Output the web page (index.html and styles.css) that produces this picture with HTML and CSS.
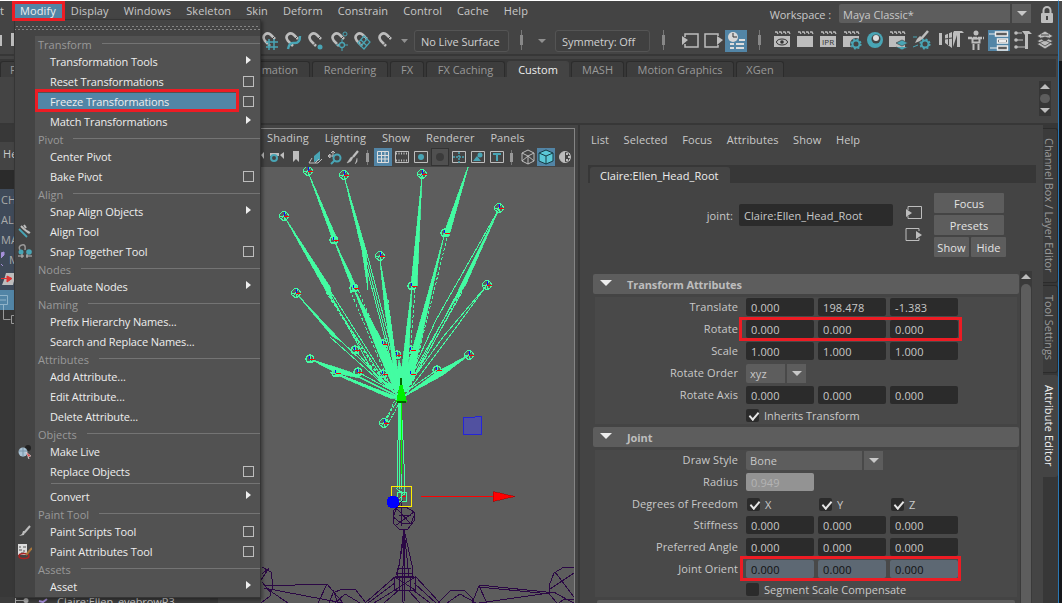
FILE: index.html
```html
<!DOCTYPE html>
<html lang="en">
<head>
<meta charset="utf-8">
<title>Maya</title>
<link rel="stylesheet" href="styles.css">
</head>
<body>
<svg class="defs" width="0" height="0">
  <defs>
    <g id="clap"><path d="M1 2h2l1 2M5 2h2l1 2M9 2h2l1 2M13 2h2l1 2" fill="none" stroke="#bdbdbd" stroke-width="1.300"/><rect x="0" y="6" width="16" height="11" fill="#bdbdbd"/></g>
    <g id="magnet"><path d="M8 14L3 9Q0 5 3 2.500Q6 0 9 3L13 7" fill="none" stroke="#bdbdbd" stroke-width="2.600"/><path d="M5 13.500L7.500 11M10 7L12.500 4.500" stroke="#444" stroke-width="1"/></g>
    <g id="gear"><circle r="3.500" fill="none" stroke="#49a5b5" stroke-width="2"/><circle r="4.800" fill="none" stroke="#49a5b5" stroke-width="1.500" stroke-dasharray="2 1.770"/></g>
    <g id="jt"><circle r="4.300" fill="none" stroke="#43fca2" stroke-width="1.200"/><path d="M-4 0H4M0 -5V5M-3 3L2 -3" stroke="#43fca2" fill="none"/><path d="M0 -4h1v4h-1z" fill="#0b0bff"/><path d="M0 0H5V1H0z" fill="#f00"/></g>
    <g id="js"><circle r="4" fill="none" stroke="#43fca2" stroke-width="1.200"/><path d="M0 -4V4M-3 2H3" stroke="#43fca2"/><path d="M-1 -3h1v3h-1z" fill="#0b0bff"/><path d="M0 0H5V1H0z" fill="#f00"/></g>
  </defs>
</svg>
<div class="app">
  <div class="window">
    <nav class="menubar">
      <span class="cut">t</span><span class="m on">Modify</span><span class="m">Display</span><span class="m">Windows</span><span class="m">Skeleton</span><span class="m">Skin</span><span class="m">Deform</span><span class="m">Constrain</span><span class="m">Control</span><span class="m">Cache</span><span class="m">Help</span>
      <div class="workspace"><span>Workspace :</span><div class="combo big"><b>Maya Classic*</b><i></i></div>
        <svg width="14" height="18"><path d="M3.500 8V4.500a3.500 3.500 0 0 1 7 0V8" fill="none" stroke="#bdbdbd" stroke-width="2"/><rect x="1" y="7" width="12" height="10" rx="1" fill="#bdbdbd"/><path d="M7 10v4" stroke="#444" stroke-width="2"/></svg>
      </div>
    </nav>
    <div class="toolbar">
      <svg class="files" width="16" height="20"><path d="M0 5h2v11h-2zM11 3h5v13h-5z" fill="#bdbdbd"/></svg>
      <svg class="snaps" width="150" height="22">
        <use href="#magnet" x="1" y="2"/><path d="M8 9v11M13 9v11M5 12h12M5 17h12" stroke="#49a5b5" stroke-width="1.500"/>
        <use href="#magnet" x="24" y="2"/><path d="M27 19Q28 12 34 13Q39 13 39 6" fill="none" stroke="#49a5b5" stroke-width="2.400"/>
        <use href="#magnet" x="47" y="2"/><circle cx="59" cy="17" r="2.500" fill="#49a5b5"/>
        <use href="#magnet" x="70" y="2"/><circle cx="84" cy="4" r="2" fill="none" stroke="#49a5b5"/><circle cx="81" cy="15" r="2.500" fill="none" stroke="#49a5b5" stroke-width="1.300"/><path d="M81 9v3M81 18v3M84 15h3M75 15h3" stroke="#49a5b5"/>
        <use href="#magnet" x="93" y="2"/><path d="M97 13l6 6 6-7-6-6zM100 10l6 6M100 16l6-7" fill="none" stroke="#49a5b5" stroke-width="1.200"/>
        <use href="#magnet" x="117" y="2"/><path d="M140 9h7l-3.500 4z" fill="#909090"/>
      </svg>
      <span class="entry live">No Live Surface</span>
      <i class="grip"></i><i class="drop"></i>
      <span class="entry sym">Symmetry: Off</span>
      <i class="grip g2"></i>
      <svg class="hist" width="68" height="22"><path d="M4 7V4H17V17H4V14" fill="none" stroke="#bdbdbd" stroke-width="1.500"/><path d="M1 6l6 4-6 5zM36 6l6 4-6 5z" fill="#bdbdbd"/><path d="M37 6V4H24V17H37V15" fill="none" stroke="#bdbdbd" stroke-width="1.500"/><rect x="44" width="22" height="22" fill="#5285a6"/><circle cx="52" cy="7" r="5" fill="#d8d8d8"/><path d="M52 3v4h4" stroke="#333" fill="none"/><path d="M49 14h4M49 18h4M58 10h6M55 14h8M55 18h8" stroke="#ddd" stroke-width="2"/></svg>
      <i class="grip g3"></i>
      <svg class="render" width="284" height="22">
        <use href="#clap"/><ellipse cx="8" cy="12" rx="5.500" ry="3" fill="none" stroke="#333"/><circle cx="8" cy="12" r="1.800" fill="#333"/>
        <use href="#clap" x="23"/><use href="#clap" x="46"/><text x="48" y="15" class="ipr">IPR</text>
        <use href="#clap" x="69"/><circle cx="82" cy="14" r="6" fill="#444"/><use href="#gear" x="82" y="14"/>
        <circle cx="101" cy="10" r="8" fill="#49a5b5"/><circle cx="102" cy="9" r="4.500" fill="#444"/><circle cx="102" cy="8" r="3" fill="#ddd"/>
        <use href="#clap" x="115"/><path d="M122 13l6-3 6 3-6 3zM122 17l6 3 6-3" fill="#49a5b5" stroke="#444" stroke-width=".700"/>
        <path d="M154 1l-7 8" stroke="#bdbdbd" stroke-width="2.500"/><path d="M141 13l5-2 3-3-3-2-3 3z" fill="#bdbdbd"/><path d="M139 7h4M139 17l5-2" stroke="#49a5b5"/><use href="#gear" x="151" y="14"/>
        <path d="M165 3h3v12h-3zM171 5l7-3v16l-7-5zM179 3l1-2h8l2 2h-4v14h-3V5l-4 12z" fill="#bdbdbd"/><path d="M171 9l7-1M174.500 3v12" stroke="#444"/>
        <circle cx="202" cy="3" r="2.500" fill="#bdbdbd"/><path d="M194 8h16" stroke="#bdbdbd" stroke-width="2.500" stroke-dasharray="4 1"/><path d="M198.500 8.500h7v4h-7zM199.500 14v6M204.500 14v6" fill="none" stroke="#bdbdbd" stroke-width="2"/>
        <rect x="214" width="22" height="21" fill="#5285a6"/><path d="M221.500 2h12v4h-12zM223.500 9h10v4h-10zM223.500 16h10v4h-10z" fill="#5c5c5c" stroke="#eee" stroke-width="1.400"/><path d="M215 4h6M216 18h7" stroke="#eee"/><path d="M225 11h7" stroke="#eee" stroke-width="2"/>
        <circle cx="242" cy="3" r="1.800" fill="#bdbdbd"/><circle cx="242" cy="10" r="1.800" fill="#bdbdbd"/><circle cx="242" cy="17" r="1.800" fill="#bdbdbd"/><path d="M243 3h5M243 10h6M243 17h9" stroke="#bdbdbd"/><path d="M248 1h7l3 3h-4v15h-3V5z" fill="#bdbdbd"/>
        <path d="M263 14l8 5 8-5-8-4zM263 11l8 5 8-5-8-4zM263 6l8-5 8 5-8 5z" fill="#bdbdbd" stroke="#444" stroke-width=".800"/><path d="M267 5h8M267 8h8" stroke="#444"/>
      </svg>
    </div>
    <div class="shelf">
      <div class="tabs">
        <span class="tab" style="width:90px">F</span><span class="tab" style="width:99px"></span><span class="tab" style="width:117px">Animation</span><span class="tab" style="width:76px">Rendering</span><span class="tab" style="width:34px">FX</span><span class="tab" style="width:79px">FX Caching</span><span class="tab cur" style="width:62px">Custom</span><span class="tab" style="width:53px">MASH</span><span class="tab" style="width:108px">Motion Graphics</span><span class="tab" style="width:48px">XGen</span>
      </div>
      <div class="shelfbody"><div class="spin"><i class="up"></i><u></u><i class="dn"></i></div></div>
    </div>
    <div class="main">
      <aside class="outliner">
        <div class="o-head">He</div><div class="o-dark"></div>
        <div class="o-row">CH</div><div class="o-row">ALE</div><div class="o-row">MA</div>
        <div class="o-row"><svg width="8" height="20"><path d="M0 4l3-1v3l-3 3M0 15l2 2" fill="#a58fd8" stroke="#a58fd8"/></svg>M</div>
        <div class="o-row o-last"><svg width="15" height="20"><path d="M5 4h10l-3 12H1l2-5z" fill="#bdbdbd"/><path d="M0 9.500h8M6 7l5 2.500-5 3.500z" stroke="#d33" fill="#d33"/></svg></div>
        <div class="o-sel"><svg width="15" height="20"><path d="M0 5.500h7.500v9H0M0 10h6M3.500 15v5" fill="none" stroke="#8fb3c9"/></svg></div>
        <div class="o-fill"><svg width="15" height="20"><path d="M3.500 0v9.500h7M15 5.500h-3.500v8H15" fill="none" stroke="#999"/></svg></div>
        <div class="o-foot"><svg width="36" height="6"><path d="M0 3.500h10M.500 0v6" stroke="#aaa"/><circle cx="11" cy="3.500" r="2.500" fill="#aaa"/><path d="M24 4l4 1 4-3M27 4v3" stroke="#a58fd8" stroke-width="2" fill="none"/></svg><span>Claire:Ellen_eyebrowR3</span></div>
      </aside>
      <section class="viewport">
        <nav class="vmenu"><span>Shading</span><span>Lighting</span><span>Show</span><span>Renderer</span><span>Panels</span></nav>
        <svg class="vicons" viewBox="261 148 313 19" width="313" height="19">
          <path d="M261 155l3-3v7zM270 153h9v3h-9zM280 155l4-3v7zM293 151h6v11l-3-3-3 3z" fill="#bdbdbd"/><circle cx="274" cy="158" r="3" fill="none" stroke="#49a5b5" stroke-width="2"/>
          <path d="M320 151v9l-6 2v-6z" fill="#49a5b5"/><path d="M312 158l-3 5h9l4-4M315 163l4-4" fill="none" stroke="#bdbdbd"/>
          <path d="M328 156h10M333 151v6M328 156l2-2v4zM331 153l2-2 2 2" stroke="#bdbdbd" fill="none"/><circle cx="337" cy="158" r="3.500" fill="#444" stroke="#49a5b5" stroke-width="2"/><path d="M335 160l-4 4" stroke="#49a5b5" stroke-width="2"/>
          <path d="M358 151l-5 6" stroke="#bdbdbd" stroke-width="2.200"/><path d="M357 158q1 4-2 6M353 157q-1 5-6 6l2-3q2-4 4-3z" fill="#bdbdbd" stroke="#bdbdbd" stroke-width=".500"/>
          <path d="M367.500 150v15M511.500 150v15" stroke="#777"/><path d="M367.500 153v9M511.500 153v9" stroke="#999" stroke-width="3"/>
          <rect x="374" y="148" width="18" height="18" fill="#5285a6"/><path d="M377.500 151.500h11v11h-11zM377.500 155.500h11M377.500 159h11M381.500 151.500v11M385 151.500v11" fill="none" stroke="#ddd"/>
          <path d="M395.500 151.500h13v11h-13z" fill="none" stroke="#bdbdbd"/><path d="M396 153.500h13M396 160.500h13" stroke="#bdbdbd" stroke-width="2" stroke-dasharray="1 1.500"/>
          <path d="M414.500 151.500h13v11h-13z" fill="none" stroke="#bdbdbd"/><circle cx="421" cy="157" r="3" fill="#49a5b5"/>
          <rect x="431.500" y="148.500" width="17" height="17" fill="#505050" stroke="#333"/><circle cx="440" cy="157" r="4" fill="#3b3b3b"/>
          <path d="M452.500 151.500h13v11h-13z" fill="none" stroke="#bdbdbd"/><path d="M453 157h12M459 152v11" stroke="#49a5b5" stroke-width="1.500" stroke-dasharray="2 1"/>
          <path d="M471.500 151.500h13v11h-13z" fill="none" stroke="#bdbdbd"/><path d="M473 161l4-5 4 5z" fill="#49a5b5"/><circle cx="480" cy="155" r="2.500" fill="#49a5b5"/>
          <path d="M490.500 151.500h13v11h-13z" fill="none" stroke="#bdbdbd"/><path d="M493 154h8M497 154v7" stroke="#49a5b5" stroke-width="2"/>
          <path d="M528 150l6 3v8l-6 3-6-3v-8zM522 153l6 3 6-3M528 156v8M522 161l6-5 6 5" fill="none" stroke="#bdbdbd"/>
          <rect x="537" y="148" width="18" height="18" fill="#5285a6"/><path d="M546 150l7 3v8l-7 3-7-3v-8z" fill="#5bc8d6" stroke="#163c44"/><path d="M539 153l7 3 7-3M546 156v8" fill="none" stroke="#163c44"/>
          <circle cx="565" cy="157" r="5.500" fill="none" stroke="#bdbdbd"/><path d="M565 151.500a5.500 5.500 0 0 0 0 11z" fill="#bdbdbd"/><path d="M566 154h4M568 157h3M566 160h4" stroke="#bdbdbd" stroke-width="2" stroke-dasharray="2 1"/>
        </svg>
        <svg class="scene" viewBox="261 167 313 436" width="313" height="436" shape-rendering="crispEdges">
          <g fill="#43fca2" stroke="#43fca2" stroke-width=".800">
            <path d="M308 172L333 240 337 239zM334 240L353 290 357 288zM353 287L378 352 396 393 402 388 386 348zM344 176L362 250 368 290 366 250zM422 176L411 286 417 286zM412 286L401 375 399 395 407 390zM469 164L443 236 449 236zM444 236L404 380 402 394 412 380zM380 260L385 310 394 370 399 390 396 360 389 310zM499 209L461 285 452 305 466 284zM284 216L325 289 332 300 330 287zM296 293L332 336 342 342zM310 359L350 372 396 395 400 398 344 377zM469 355L438 371 403 397 443 375zM400 398L360 378 330 372 390 398z"/>
            <path d="M385 345L393 380 400 397 408 385 417 350 405 378 399 360 396 378z"/>
          </g>
          <g fill="none" stroke="#43fca2">
            <path d="M362 250L388 350 400 390M366 250L393 352 402 390M364 250L390 350M332 300L380 374 400 393M328 290L374 374 398 396M329 289L391 387 400 393M330 337L384 385 400 396M342 342L400 397M336 373L400 399M358 372L400 395M355 350L376 375 400 393M383 344L400 390M452 305L402 392M458 292L406 391M462 292L408 388M487 285L443 337 400 397M487 285L452 333 404 397M469 355L436 376 401 399M437 370L401 395M499 209L436 320 404 390"/>
            <path stroke-dasharray="3 2" d="M350 290L392 390M358 290L402 392M352 348L398 393M447 238L412 380M415 290L408 384M388 300L398 380M462 290L408 390M326 292L386 386"/>
            <path d="M386 422L394 402 399 396M384 421L400 397M389 422L402 398" stroke-dasharray="3 1"/>
            <path d="M398 399V440L397 489 404 495 405 488 403 440 401 399M399 400V489M401 440V489"/><path d="M399 399V440M401 400V440" stroke-width="2"/>
            <path d="M397 492h9v9h-9zM397 501l9-9M401 491v11"/>
          </g>
          <path d="M401 400h1V474h-1z" fill="#0f0"/>
          <use href="#jt" x="308" y="171"/><use href="#jt" x="344" y="175"/><use href="#jt" x="422" y="174"/><use href="#jt" x="284" y="216"/><use href="#jt" x="499" y="208"/><use href="#js" x="334" y="240"/><use href="#js" x="445" y="233"/><use href="#jt" x="380" y="256"/><use href="#js" x="354" y="288"/><use href="#js" x="412" y="286"/><use href="#jt" x="296" y="293"/><use href="#jt" x="487" y="285"/><use href="#js" x="355" y="350"/><use href="#js" x="383" y="344"/><use href="#js" x="310" y="359"/><use href="#js" x="336" y="373"/><use href="#js" x="358" y="372"/><use href="#js" x="383" y="374"/><use href="#js" x="397" y="355"/><use href="#js" x="411" y="350"/><use href="#js" x="411" y="374"/><use href="#jt" x="469" y="355"/><use href="#js" x="437" y="370"/><use href="#jt" x="384" y="423"/>
          <path d="M401 379L396 402H407z" fill="#00f000"/><path d="M401 378v7M397 402h9" stroke="#060" stroke-width="1.500"/>
          <path d="M463.500 417.500l12-.500 1-1h4.500v18h-17.500z" fill="#5151a0" stroke="#2525d8"/>
          <g fill="none" stroke="#2b0845">
            <path d="M403 500L393 511V523L399 529H408L414 521V512L406 507H397L393 517 401 523H411L414 516M401 503V526M397 509L411 524M414 512L395 526M399 515H411"/>
            <path d="M404 529L402 548 397 576H413L412 565 404 529 399 566 396 575M404 530L402 603M404 530L409 577M405 530L404 603M398 573H413M397 568H411M394 577H415V590H395zM395 577L415 590M415 577L395 590M399 577V590M410 576V590"/>
            <path d="M396 576L365 603M395 583L368 603M395 590L374 603M399 590L384 603M415 576L440 603M414 583L436 603M413 590L430 603M408 590L420 603"/>
            <path d="M264 586L327 584 343 603M264 588L343 603M327 584L318 603M262 567L271 572 273 585 270 596 261 603M262 574L269 568 261 580M262 582L270 592M266 588L288 603M329 603L333 593 342 589H355L366 603M335 603L345 594 360 603M338 603L333 590M438 603L450 591 464 590 472 598 474 603M447 603L460 594 476 603M479 585L556 593M479 587L550 594M479 586L472 603M479 586L487 603M556 592L479 603M574 567H564L554 573 549 586 550 595 557 603M555 572L574 597M574 573L550 589M553 592L574 603M559 603L564 599H574"/>
          </g>
          <path d="M391 486h21v21h-21zM392 487v19h19v-19z" fill="#ffee00" fill-rule="evenodd"/><circle cx="393" cy="502" r="6.500" fill="#00f"/>
          <path d="M421 496h73v1h-73z" fill="#f00"/><path d="M493 491.500V501.500L515 496.500z" fill="#f00" stroke="#900" stroke-width=".500"/><path d="M402 496h4v1h-4z" fill="#f00"/>
        </svg>
      </section>
      <section class="attrs">
        <nav class="amenu"><span>List</span><span>Selected</span><span>Focus</span><span>Attributes</span><span>Show</span><span>Help</span></nav>
        <div class="nodetabs"><span>Claire:Ellen_Head_Root</span></div>
        <div class="node">
          <label>joint:</label><span class="name">Claire:Ellen_Head_Root</span>
          <svg width="17" height="37"><path d="M3 5V1.500H16.500V13.500H3V11" fill="none" stroke="#bdbdbd"/><path d="M1 4l6 4-6 4zM11 26l6 4-6 4z" fill="#bdbdbd"/><path d="M14 26V23.500H1V35.500H14V33" fill="none" stroke="#bdbdbd"/></svg>
          <div class="btns"><button>Focus</button><button>Presets</button><div><button class="sm">Show</button><button class="sm">Hide</button></div></div>
        </div>
        <div class="scroller">
          <div class="list">
            <h3><i></i>Transform Attributes</h3>
            <div class="group">
              <div class="row"><label>Translate</label><b>0.000</b><b>198.478</b><b>-1.383</b></div>
              <div class="row"><label>Rotate</label><b>0.000</b><b>0.000</b><b>0.000</b></div>
              <div class="row"><label>Scale</label><b>1.000</b><b>1.000</b><b>1.000</b></div>
              <div class="row"><label>Rotate Order</label><div class="combo xyz"><b>xyz</b><i></i></div></div>
              <div class="row"><label>Rotate Axis</label><b>0.000</b><b>0.000</b><b>0.000</b></div>
              <div class="row chk"><label></label><em class="on"></em><span>Inherits Transform</span></div>
            </div>
            <h3 class="h2"><i></i>Joint</h3>
            <div class="group">
              <div class="row"><label>Draw Style</label><div class="combo bone"><b>Bone</b><i></i></div></div>
              <div class="row"><label>Radius</label><b class="dis">0.949</b></div>
              <div class="row dof"><label>Degrees of Freedom</label><em class="on"></em><span>X</span><em class="on"></em><span>Y</span><em class="on"></em><span>Z</span></div>
              <div class="row"><label>Stiffness</label><b>0.000</b><b>0.000</b><b>0.000</b></div>
              <div class="row"><label>Preferred Angle</label><b>0.000</b><b>0.000</b><b>0.000</b></div>
              <div class="row lock"><label>Joint Orient</label><b>0.000</b><b>0.000</b><b>0.000</b></div>
              <div class="row chk"><label></label><em></em><span>Segment Scale Compensate</span></div>
            </div>
            <div class="next"></div>
          </div>
          <div class="bar"><i class="up"></i><u></u></div>
        </div>
      </section>
      <aside class="side"><span style="height:155px">Channel Box / Layer Editor</span><span style="height:88px">Tool Settings</span><span style="height:102px" class="cur">Attribute Editor</span></aside>
    </div>
  </div>
  <div class="edge"></div>
</div>

<div class="menu">
  <div class="tear"></div>
  <div class="mbody">
    <div class="hd">Transform</div>
    <div class="it">Transformation Tools<i class="ar"></i></div>
    <div class="it">Reset Transformations<i class="bx"></i></div>
    <div class="it hl"><span>Freeze Transformations</span><i class="bx"></i></div>
    <div class="it">Match Transformations<i class="ar"></i></div>
    <div class="hd">Pivot</div>
    <div class="it">Center Pivot</div>
    <div class="it">Bake Pivot<i class="bx"></i></div>
    <div class="hd">Align</div>
    <div class="it">Snap Align Objects<i class="ar"></i></div>
    <div class="it"><svg width="14" height="16"><path d="M1 5l8 8" stroke="#49a5b5" stroke-width="1.800"/><path d="M3 2l3 3M6 1l2 3M9 7l3 2M6 5l5 4" stroke="#bdbdbd" stroke-width="2"/></svg>Align Tool</div>
    <div class="it"><svg width="14" height="16"><path d="M2 6Q0 2 4 1T7 6" fill="none" stroke="#999" stroke-width="1.500"/><circle cx="3" cy="8" r="2.500" fill="#49a5b5"/><circle cx="11" cy="8" r="2.800" fill="#49a5b5"/><path d="M0 12h6M8 12h6M4 10v4M9 10v4" stroke="#bdbdbd"/></svg>Snap Together Tool<i class="bx"></i></div>
    <div class="hd">Nodes</div>
    <div class="it">Evaluate Nodes<i class="ar"></i></div>
    <div class="hd">Naming</div>
    <div class="it">Prefix Hierarchy Names...</div>
    <div class="it">Search and Replace Names...</div>
    <div class="hd">Attributes</div>
    <div class="it">Add Attribute...</div>
    <div class="it">Edit Attribute...</div>
    <div class="it">Delete Attribute...</div>
    <div class="hd">Objects</div>
    <div class="it"><svg width="14" height="16"><circle cx="10" cy="4" r="3" fill="#222"/><circle cx="5" cy="8" r="4.500" fill="#a9c2d4"/><path d="M1 7h8M5 4v9" stroke="#7893a6"/><path d="M8 8l5 4-3 1 1 2z" fill="#d44" stroke="#eee" stroke-width=".500"/></svg>Make Live</div>
    <div class="it">Replace Objects<i class="bx"></i></div>
    <div class="sep"></div>
    <div class="it">Convert<i class="ar"></i></div>
    <div class="hd">Paint Tool</div>
    <div class="it"><svg width="14" height="16"><path d="M12 2l-6 7" stroke="#bdbdbd" stroke-width="2"/><path d="M7 7l-1 4-5 1 3-2 1-3z" fill="#bdbdbd"/></svg>Paint Scripts Tool<i class="bx"></i></div>
    <div class="it"><svg width="14" height="16"><path d="M0 0h9v11H0z" fill="#ddd"/><path d="M1 3h2M5 3h3M1 6h3M5 7h2M3 9h3" stroke="#555"/><ellipse cx="6" cy="12" rx="5" ry="2.500" fill="none" stroke="#a22" stroke-width="1.500"/><path d="M14 4l-6 7" stroke="#a8763c" stroke-width="2"/></svg>Paint Attributes Tool<i class="bx"></i></div>
    <div class="hd">Assets</div>
    <div class="it">Asset<i class="ar"></i></div>
  </div>
</div>
<div class="mark mk1"></div><div class="mark mk2"></div><div class="mark mk3"></div><div class="mark mk4"></div>
</body>
</html>
```

FILE: styles.css
```css
* { box-sizing: border-box; }
body { margin: 0; width: 1062px; height: 603px; overflow: hidden; background: #444; color: #c8c8c8; font: 11px/16px "Open Sans", sans-serif; letter-spacing: .1px; }
svg { display: block; flex: none; }
.defs { position: absolute; }
b, i, em, u { font-weight: normal; font-style: normal; text-decoration: none; }
.app { display: flex; height: 603px; }
.window { width: 1058px; height: 603px; border-top: 1px solid #fff; display: flex; flex-direction: column; overflow: hidden; flex: none; }
.edge { width: 4px; background: linear-gradient(#4a4a4a 0 60px, #15171a 60px); border-left: 1px solid #2a78b4; border-top: 1px solid #fff; }

.menubar { height: 27px; display: flex; align-items: flex-start; flex: none; white-space: nowrap; }
.menubar .m { padding: 2px 7px 0 8px; height: 20px; }
.menubar .cut { width: 12px; padding-top: 2px; }
.menubar .on { background: #5285a6; color: #eee; }
.workspace { display: flex; margin-left: auto; align-items: flex-start; gap: 8px; padding: 3px 4px 0 0; letter-spacing: 0; }
.workspace > span { padding-top: 3px; letter-spacing: -.1px; }
.workspace svg { margin: 2px 0 0 1px; }
.combo { display: flex; gap: 2px; height: 19px; }
.combo b { background: #5d5d5d; padding: 2px 4px; border-radius: 2px 0 0 2px; }
.combo i { background: #5d5d5d; width: 19px; display: flex; justify-content: center; align-items: center; }
.combo i::after { content: ""; border: 5px solid transparent; border-top-color: #c8c8c8; border-bottom: 0; }
.combo.big b { width: 171px; padding-top: 3px; }

.toolbar { height: 26px; flex: none; display: flex; align-items: flex-start; padding-top: 2px; }
.snaps { margin-left: 245px; }
.entry { height: 22px; border: 1px solid #545454; border-radius: 3px; padding: 3px 6px; color: #d0d0d0; width: 100px; background: #404040; white-space: nowrap; letter-spacing: -.05px; }
.live { margin-left: 3px; }
.grip { width: 3px; height: 20px; margin-left: 11px; background: linear-gradient(#888, #888) 0 5px / 3px 10px no-repeat, linear-gradient(#777, #777) 1px 0 / 1px 20px no-repeat; }
.drop { margin: 9px 9px 0 15px; border: 4px solid transparent; border-top-color: #909090; border-bottom: 0; }
.g2 { margin-left: 12px; }
.hist { margin-left: 16px; }
.g3 { margin-left: 9px; }
.render { margin-left: 13px; }
.ipr { font: 8px "Open Sans"; fill: #333; }

.shelf { border-top: 2px solid #373737; height: 71px; border-bottom: 2px solid #373737; padding-top: 3px; flex: none; }
.tabs { background: #373737; height: 18px; width: 1056px; display: flex; gap: 2px; padding-top: 2px; letter-spacing: 0; }
.tab { background: #3d3d3d; border: 1px solid #2c2c2c; border-bottom: 0; border-radius: 3px 3px 0 0; color: #999; height: 16px; line-height: 16px; text-align: center; white-space: nowrap; flex: none; }
.tab:first-child { text-align: left; padding-left: 9px; }
.tab:nth-child(3) { text-align: right; padding-right: 11px; }
.tab.cur { background: #444; border-color: #444; color: #eee; }
.shelfbody { height: 46px; display: flex; justify-content: flex-end; padding: 4px 7px 0 0; }
.spin { width: 12px; height: 35px; background: #363636; display: flex; flex-direction: column; align-items: center; justify-content: space-between; padding: 3px 0; }
.spin u { width: 10px; height: 9px; border-radius: 5px; background: #5d5d5d; }
.up { border: 5px solid transparent; border-bottom-color: #bdbdbd; border-top: 0; }
.dn { border: 5px solid transparent; border-top-color: #bdbdbd; border-bottom: 0; }

.main { display: flex; flex: 1; min-height: 0; }
.outliner { width: 218px; display: flex; flex-direction: column; background: #383838; flex: none; padding-top: 17px; }
.o-head { height: 28px; background: #444; padding: 4px 3px; flex: none; }
.o-dark { height: 19px; background: #2b2b2b; flex: none; }
.o-row { height: 20px; background: #3f4a59; color: #aaa; line-height: 22px; padding-left: 1px; display: flex; flex: none; }
.o-last { height: 21px; }
.o-sel { height: 20px; background: #5285a6; flex: none; }
.o-fill { flex: 1; min-height: 0; }
.o-foot { height: 6px; display: flex; padding-left: 15px; line-height: 9px; gap: 6px; flex: none; background: #3c3c3c; width: 210px; letter-spacing: -.05px; }
.viewport { margin-left: 43px; width: 314px; margin-top: 3px; border-top: 1px solid #858585; border-right: 1px solid #858585; flex: none; background: #444; }
.vmenu { height: 19px; display: flex; gap: 15.800px; padding: 1px 0 0 6px; }
.scene { background: #5d5d5d; }

.attrs { border-left: 2px solid #373737; margin-left: 3px; width: 465px; flex: none; display: flex; flex-direction: column; }
.amenu { display: flex; gap: 14.500px; padding: 7px 0 0 11px; height: 40px; flex: none; }
.nodetabs { height: 18px; margin: 0 7px 0 8px; background: #373737; padding: 2px 0 0 2px; flex: none; }
.nodetabs span { display: block; width: 140px; height: 16px; background: #444; border-radius: 3px 3px 0 0; line-height: 17px; padding-left: 10px; color: #eee; letter-spacing: .05px; }
.node { display: flex; height: 88px; flex: none; padding: 10px 0 0; }
.node label { width: 153px; text-align: right; margin: 15px 6px 0 0; }
.node .name { width: 154px; height: 22px; margin-top: 11px; background: #2b2b2b; border-radius: 2px; padding: 4px 5px; letter-spacing: .05px; }
.node > svg { margin: 12px 12px 0 12px; }
.btns { display: flex; flex-direction: column; gap: 2px; }
.btns div { display: flex; gap: 2px; }
button { font: inherit; letter-spacing: inherit; color: #e4e4e4; background: #5d5d5d; border: 0; padding: 2px 0 0; border-radius: 1px; width: 70px; height: 20px; }
button.sm { width: 35px; }
.scroller { display: flex; flex: 1; min-height: 0; }
.list { width: 439px; padding: 3px 0 0 13px; }
h3 { margin: 0; height: 20px; background: #5d5d5d; border-radius: 2px; font-size: 11px; line-height: 22px; color: #bdbdbd; padding-left: 7px; display: flex; gap: 15px; letter-spacing: -.1px; }
h3 i { border: 6px solid transparent; border-top: 6px solid #eee; border-bottom: 0; height: 6px; margin-top: 6px; }
.h2 { margin-top: 3px; }
.group { background: #494949; margin: 3px 2px 0; height: 127px; padding-top: 1px; }
.h2 + .group { height: 147px; }
.row { display: flex; height: 22px; gap: 4px; }
.row label { width: 143px; text-align: right; margin-right: 4px; padding-top: 1px; }
.row > b { width: 68px; height: 18px; background: #2b2b2b; border-radius: 2px; padding: 2px 5px; }
.combo b { color: #c8c8c8; }
.xyz b { width: 39px; }
.bone b { width: 116px; }
.row .dis { background: #939393; color: #b4b4b4; }
.row.lock > b { background: #5d6873; color: #111; }
.row em { width: 13px; height: 13px; background: #2b2b2b; border-radius: 2px; flex: none; }
.row em.on::after { content: ""; display: block; width: 4px; height: 8px; border: solid #e6e6e6; border-width: 0 2px 2px 0; transform: translate(5px, 1px) rotate(40deg) skewY(8deg); }
.chk { padding-top: 1px; }
.row em + span { margin: -1px 0 0 1px; white-space: nowrap; letter-spacing: 0; }
.row.dof { height: 21px; }
.dof em { margin: 3px 0 0 1px; }
.row.dof em + span { margin: 2px 0 0 1px; width: 49px; }
.next { height: 10px; margin: 3px 4px 0; background: #5d5d5d; border-radius: 2px; }
.bar { width: 12px; margin-left: 1px; background: #3a3a3a; display: flex; flex-direction: column; align-items: center; padding-top: 3px; }
.bar u { width: 10px; flex: 1; margin-top: 5px; border-radius: 5px 5px 0 0; background: #5d5d5d; }

.side { flex: 1; background: #373737; padding-top: 3px; display: flex; flex-direction: column; gap: 2px; }
.side span { writing-mode: vertical-rl; line-height: 15px; background: #3b3b3b; border: 1px solid #2b2b2b; border-left: 0; border-radius: 0 3px 3px 0; color: #999; white-space: nowrap; padding-top: 9px; width: 15px; flex: none; letter-spacing: -.05px; }
.side .cur { background: #444; border-color: #444; color: #eee; letter-spacing: .15px; }

.menu { position: absolute; left: 14px; top: 19px; width: 247px; height: 579px; background: #525252; border: 1px solid #353535; color: #eee; box-shadow: 2px 2px 3px rgba(0,0,0,.35); overflow: hidden; letter-spacing: -.12px; }
.tear { height: 16px; background: radial-gradient(circle, #858585 0 .6px, transparent 1px) 0 5px / 4px 3px repeat-x, radial-gradient(circle, #858585 0 .6px, transparent 1px) 2px 8px / 4px 3px repeat-x, #444; }
.mbody { border-left: 20px solid #444; height: 562px; padding-top: 1px; }
.hd { height: 15px; line-height: 15px; padding: 0 0 1px 3px; color: #999; display: flex; align-items: center; gap: 10px; letter-spacing: 0; }
.hd::after { content: ""; height: 1px; flex: 1; background: #747474; margin-top: -1px; }
.it { height: 20px; line-height: 19px; display: flex; padding-left: 15px; padding-right: 6px; white-space: nowrap; }
.it svg { margin: 2px 18px 0 -32px; }
.it i { margin-left: auto; }
.bx { width: 11px; height: 11px; border: 1px solid #bdbdbd; margin-top: 4px; }
.ar { border: 4px solid transparent; border-left: 5px solid #eee; border-right: 0; height: 8px; margin: 4px 3px 0 0; }
.hl { padding-left: 3px; }
.hl span { background: #5285a6; width: 198px; height: 17px; margin-top: 1px; padding-left: 12px; line-height: 17px; }
.sep { height: 5px; border-top: 1px solid #747474; margin: 1px 0 -1px 16px; }

.mark { position: absolute; border: 3px solid #ed1c24; }
.mk1 { left: 12px; top: 1px; width: 53px; height: 20px; }
.mk2 { left: 35px; top: 89px; width: 204px; height: 23px; }
.mk3 { left: 739px; top: 317px; width: 223px; height: 24px; }
.mk4 { left: 740px; top: 556px; width: 221px; height: 25px; }
```
